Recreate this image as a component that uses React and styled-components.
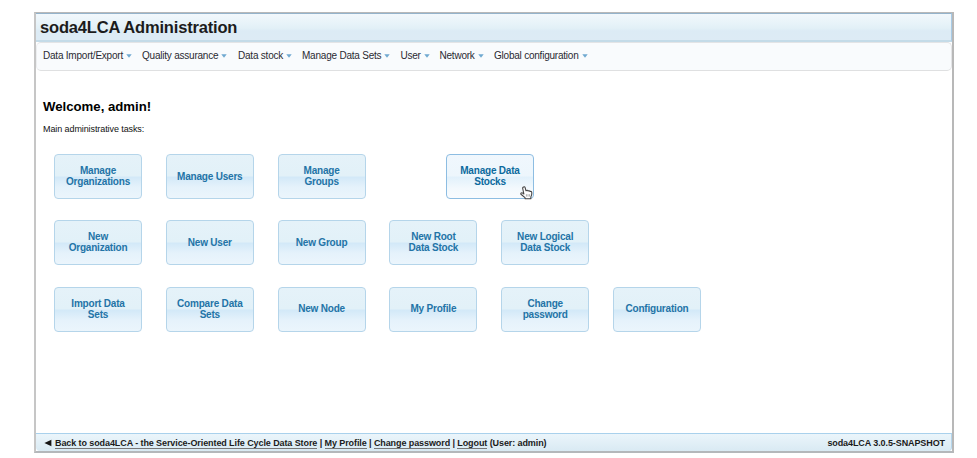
import React from "react";
import styled, { createGlobalStyle } from "styled-components";

const GlobalStyle = createGlobalStyle`
  * { box-sizing: border-box; }
  body {
    margin: 0;
    background: #fff;
    font-family: "Liberation Sans", Arial, Helvetica, sans-serif;
    color: #111;
  }
`;

const Page = styled.div`
  width: 977px;
  height: 458px;
  padding: 12px 23px 5px 34px;
`;

const Window = styled.div`
  height: 441px;
  display: flex;
  flex-direction: column;
  border: 1px solid #b9b9b9;
  border-left: 2px solid #c6c6c6;
  border-right: 2px solid #b8b8b8;
  border-bottom: 2px solid #b4b8bb;
  background: #fff;
`;

const TitleBar = styled.header`
  height: 29px;
  flex: none;
  padding: 4px 0 0 4px;
  border: 1px solid #a8cbe6;
  border-top-color: #94b3cb;
  border-left: 0;
  border-bottom: 2px solid #c4dbe8;
  background: linear-gradient(#f2f8fc 0%, #e2f0f7 55%, #dcebf5 65%, #ddebf5 100%);
`;

const Title = styled.h1`
  margin: 0;
  font-size: 16.5px;
  letter-spacing: -0.18px;
  line-height: 18px;
  font-weight: bold;
  color: #1c1c1c;
  white-space: nowrap;
`;

const MenuBar = styled.nav`
  height: 29px;
  flex: none;
  display: flex;
  padding: 6px 0 0 6px;
  border: 1px solid #e3e4e6;
  border-left-color: #eceef0;
  border-bottom-color: #dfe0e1;
  border-radius: 5px;
  background: #f9fbfd;
`;

const MenuItem = styled.div`
  width: ${(p) => p.$width}px;
  display: flex;
  gap: 3px;
  font-size: 10px;
  letter-spacing: -0.22px;
  line-height: 13px;
  color: #2a2a32;
  white-space: nowrap;
`;

const Caret = styled.svg`
  width: 6px;
  height: 4px;
  margin-top: 5px;
  fill: #6fa9d0;
`;

const Content = styled.main`
  flex: 1;
  padding: 28px 0 0 7px;
`;

const Welcome = styled.h2`
  margin: 0;
  font-size: 13.2px;
  line-height: 16px;
  color: #000;
`;

const Intro = styled.p`
  margin: 8px 0 0;
  font-size: 9px;
  letter-spacing: -0.09px;
  line-height: 12px;
  color: #111;
`;

const Tasks = styled.div`
  display: flex;
  flex-direction: column;
  gap: 21.4px;
  padding: 19px 0 0 11px;
`;

const TaskRow = styled.div`
  display: flex;
  gap: 23.8px;
`;

const TaskButton = styled.button`
  width: 88px;
  height: 45px;
  margin: 0 0 0 ${(p) => (p.$offset ? "56.6px" : "0")};
  padding: 0 6px 1px;
  border: 1px solid ${(p) => (p.$hover ? "#8dbde2" : "#b5d5ea")};
  border-radius: 4px;
  background: ${(p) =>
    p.$hover
      ? "linear-gradient(#f0f7fd 0%, #edf6fc 48%, #e2f1fb 52%, #f3f9fd 78%, #f8fbfe 100%)"
      : "linear-gradient(#e5f2f9 0%, #e2f1f8 48%, #d3e9f8 52%, #e5f2fb 75%, #ebf5fc 100%)"};
  font-family: inherit;
  font-size: 10px;
  letter-spacing: -0.2px;
  line-height: 11px;
  font-weight: bold;
  color: ${(p) => (p.$hover ? "#0c6a9e" : "#2374a7")};
  white-space: pre-line;
  position: relative;
`;

const HandCursor = styled.svg`
  position: absolute;
  left: 73px;
  top: 31px;
  width: 13px;
  height: 14px;
`;

const Footer = styled.footer`
  height: 18px;
  flex: none;
  display: flex;
  justify-content: space-between;
  padding: 2px 6px 0 7px;
  border-top: 1px solid #a9d1ec;
  border-right: 1px solid #b5d6ec;
  border-radius: 0 0 4px 4px;
  background: linear-gradient(#ebf5fb, #d9eaf3);
  font-size: 9px;
  letter-spacing: -0.09px;
  line-height: 14px;
  font-weight: bold;
  color: #1b1b1b;
  white-space: nowrap;
`;

const FooterLinks = styled.div`
  display: flex;
  white-space: pre;
`;

const BackArrow = styled.svg`
  width: 8px;
  height: 8px;
  margin: 3px 3px 0 1px;
  fill: #151515;
`;

const FooterLink = styled.a`
  height: 13px;
  border-bottom: 1px solid #777;
`;

const menus = [
  ["Data Import/Export", 99],
  ["Quality assurance", 96],
  ["Data stock", 64],
  ["Manage Data Sets", 98.5],
  ["User", 39],
  ["Network", 54.5],
  ["Global configuration", 96],
];

const rows = [
  [
    { label: "Manage\nOrganizations" },
    { label: "Manage Users" },
    { label: "Manage\nGroups" },
    { label: "Manage Data\nStocks", active: true },
  ],
  [
    { label: "New\nOrganization" },
    { label: "New User" },
    { label: "New Group" },
    { label: "New Root\nData Stock" },
    { label: "New Logical\nData Stock" },
  ],
  [
    { label: "Import Data\nSets" },
    { label: "Compare Data\nSets" },
    { label: "New Node" },
    { label: "My Profile" },
    { label: "Change\npassword" },
    { label: "Configuration" },
  ],
];

function Hand() {
  return (
    <HandCursor viewBox="0 0 13 14">
      <path
        d="M3.1 1.3C3.9.4 5 .8 5.2 1.8L6 4.8C6.7 4 7.8 4.2 8.1 5C8.8 4.4 9.8 4.8 10 5.5C11 5.1 11.8 5.7 11.8 6.7C11.9 8.5 11.7 9.4 10.9 10.7L10.8 12.8H5.2L5 11.7L1.3 8.5C.2 7.5 1.3 6.3 2.4 6.9L3.9 8L2.7 2.5C2.6 2 2.7 1.6 3.1 1.3Z"
        fill="#fff"
        stroke="#444"
        strokeWidth="1.1"
        strokeLinejoin="round"
      />
      <path d="M6.4 8.2v2.4M8 8.2v2.4M9.6 8.2v2.4" stroke="#888" strokeWidth=".7" />
    </HandCursor>
  );
}

export default function App() {
  return (
    <Page>
      <GlobalStyle />
      <Window>
        <TitleBar>
          <Title>soda4LCA Administration</Title>
        </TitleBar>
        <MenuBar>
          {menus.map(([label, width]) => (
            <MenuItem key={label} $width={width}>
              {label}
              <Caret viewBox="0 0 6 4">
                <path d="M.3.3h5.4L3 3.7z" />
              </Caret>
            </MenuItem>
          ))}
        </MenuBar>
        <Content>
          <Welcome>Welcome, admin!</Welcome>
          <Intro>Main administrative tasks:</Intro>
          <Tasks>
            {rows.map((row, i) => (
              <TaskRow key={i}>
                {row.map(({ label, active }) => (
                  <TaskButton key={label} $hover={active} $offset={active}>
                    {label}
                    {active && <Hand />}
                  </TaskButton>
                ))}
              </TaskRow>
            ))}
          </Tasks>
        </Content>
        <Footer>
          <FooterLinks>
            <BackArrow viewBox="0 0 8 8">
              <path d="M.4 4 7.4.8v6.4z" />
            </BackArrow>
            <FooterLink>Back to soda4LCA - the Service-Oriented Life Cycle Data Store</FooterLink>
            {" | "}
            <FooterLink>My Profile</FooterLink>
            {" | "}
            <FooterLink>Change password</FooterLink>
            {" | "}
            <FooterLink>Logout</FooterLink>
            {" (User: admin)"}
          </FooterLinks>
          <span>soda4LCA 3.0.5-SNAPSHOT</span>
        </Footer>
      </Window>
    </Page>
  );
}
